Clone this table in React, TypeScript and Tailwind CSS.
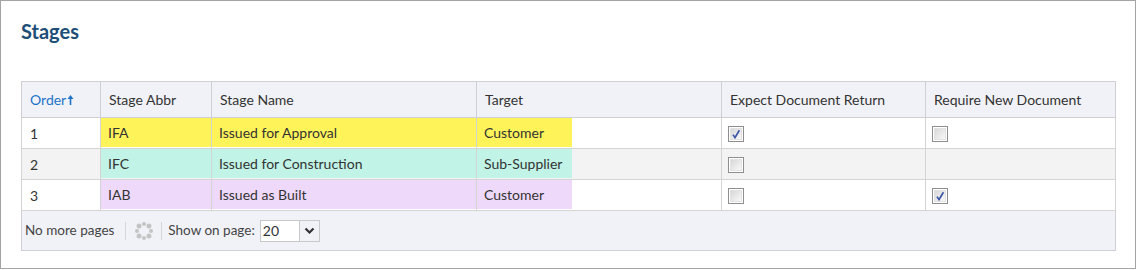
import React from "react";

type Stage = {
    order: number;
    abbr: string;
    name: string;
    target: string;
    color: string;
    expectReturn: boolean;
    requireNew: boolean | null;
};

const stages: Stage[] = [
    { order: 1, abbr: "IFA", name: "Issued for Approval", target: "Customer", color: "bg-[#fff35a]", expectReturn: true, requireNew: false },
    { order: 2, abbr: "IFC", name: "Issued for Construction", target: "Sub-Supplier", color: "bg-[#c1f3e7]", expectReturn: false, requireNew: null },
    { order: 3, abbr: "IAB", name: "Issued as Built", target: "Customer", color: "bg-[#efd9fb]", expectReturn: false, requireNew: true },
];

function Check({ checked }: { checked: boolean }) {
    return (
        <span className="inline-flex w-[16px] h-[16px] border border-[#8e8e8e] p-px bg-white">
            <span className="flex-1 border border-[#e2e2e2] bg-gradient-to-br from-[#d8d8d8] to-[#f8f8f8] flex items-center justify-center">
                {checked && (
                    <svg width="10" height="10" viewBox="0 0 10 10">
                        <path d="M2 5.6 L4 8.6 L8.4 1.2" fill="none" stroke="#3b56a6" strokeWidth="1.7" />
                    </svg>
                )}
            </span>
        </span>
    );
}

function Spinner() {
    const dots = Array.from({ length: 8 }, (_, i) => {
        const a = (i / 8) * Math.PI * 2 - Math.PI / 2;
        return { x: 10 + Math.cos(a) * 7, y: 10 + Math.sin(a) * 7, r: 2 + (i % 2) * 0.5 };
    });
    return (
        <svg width="20" height="20" viewBox="0 0 20 20">
            {dots.map((d, i) => (
                <circle key={i} cx={d.x} cy={d.y} r={d.r} fill="#c4c4c4" />
            ))}
        </svg>
    );
}

export default function App() {
    const cell = "border border-[#cfcfd4] px-2 text-left font-normal";
    const td = "border border-[#d4d4d4] p-0";
    return (
        <div className="w-[1136px] h-[269px] border border-[#a3a3a3] bg-white font-['Lato','Liberation_Sans',sans-serif] text-[14px] text-[#333]">
            <h2 className="pl-5 pt-[18px] text-[20px] leading-6 font-bold text-[#1d4e78]">Stages</h2>

            <div className="pl-5 pt-[38px]">
                <table className="table-fixed border-collapse w-[1095px]">
                    <colgroup>
                        <col className="w-[79px]" />
                        <col className="w-[111px]" />
                        <col className="w-[265px]" />
                        <col className="w-[245px]" />
                        <col className="w-[204px]" />
                        <col className="w-[190px]" />
                    </colgroup>
                    <thead>
                        <tr className="h-[36px] bg-[#f1f2f7]">
                            <th className={cell}>
                                <span className="inline-flex items-center text-[#1e73c6]">
                                    Order
                                    <svg width="7" height="12" viewBox="0 0 7 12" className="ml-px">
                                        <path d="M3.5 1 L6.5 5 L4.3 5 L4.3 11 L2.7 11 L2.7 5 L0.5 5 Z" fill="#1e73c6" />
                                    </svg>
                                </span>
                            </th>
                            <th className={cell}>Stage Abbr</th>
                            <th className={cell}>Stage Name</th>
                            <th className={cell}>Target</th>
                            <th className={cell}>Expect Document Return</th>
                            <th className={cell}>Require New Document</th>
                        </tr>
                    </thead>
                    <tbody>
                        {stages.map((s, i) => (
                            <tr key={s.order} className={i % 2 === 1 ? "bg-[#f3f3f3]" : "bg-white"}>
                                <td className={`${td} px-2 h-[31px]`}>{s.order}</td>
                                <td className={`${td} pb-px align-top`}>
                                    <div className={`${s.color} h-[29px] leading-[29px] px-[7px]`}>{s.abbr}</div>
                                </td>
                                <td className={`${td} pb-px align-top`}>
                                    <div className={`${s.color} h-[29px] leading-[29px] px-[7px]`}>{s.name}</div>
                                </td>
                                <td className={`${td} pb-px align-top`}>
                                    <div className={`${s.color} w-[95px] h-[29px] leading-[29px] px-[7px]`}>{s.target}</div>
                                </td>
                                <td className={`${td} px-[6px]`}>
                                    <div className="flex items-center pt-px">
                                        <Check checked={s.expectReturn} />
                                    </div>
                                </td>
                                <td className={`${td} px-[6px]`}>
                                    {s.requireNew !== null && (
                                        <div className="flex items-center pt-px">
                                            <Check checked={s.requireNew} />
                                        </div>
                                    )}
                                </td>
                            </tr>
                        ))}
                    </tbody>
                </table>

                <div className="w-[1095px] h-[40px] border border-t-0 border-[#cfcfd4] bg-[#f1f2f7] flex items-center pl-[3px] text-[13.5px] text-[#444]">
                    <span>No more pages</span>
                    <span className="w-px h-[18px] bg-[#d6d6d6] ml-[11px] mr-[8px]" />
                    <Spinner />
                    <span className="w-px h-[18px] bg-[#d6d6d6] ml-[7px] mr-[6px]" />
                    <span>Show on page:</span>
                    <div className="ml-[5px] flex h-[22px] border border-[#c9c9c9] bg-white">
                        <span className="w-[38px] pl-[2px] leading-[20px] text-[14px] text-[#333]">20</span>
                        <span className="w-[20px] border-l border-[#c9c9c9] bg-[#f1f2f7] flex items-center justify-center">
                            <svg width="11" height="8" viewBox="0 0 11 8">
                                <path d="M1.5 1.5 L5.5 5.5 L9.5 1.5" fill="none" stroke="#333" strokeWidth="2.2" />
                            </svg>
                        </span>
                    </div>
                </div>
            </div>
        </div>
    );
}
